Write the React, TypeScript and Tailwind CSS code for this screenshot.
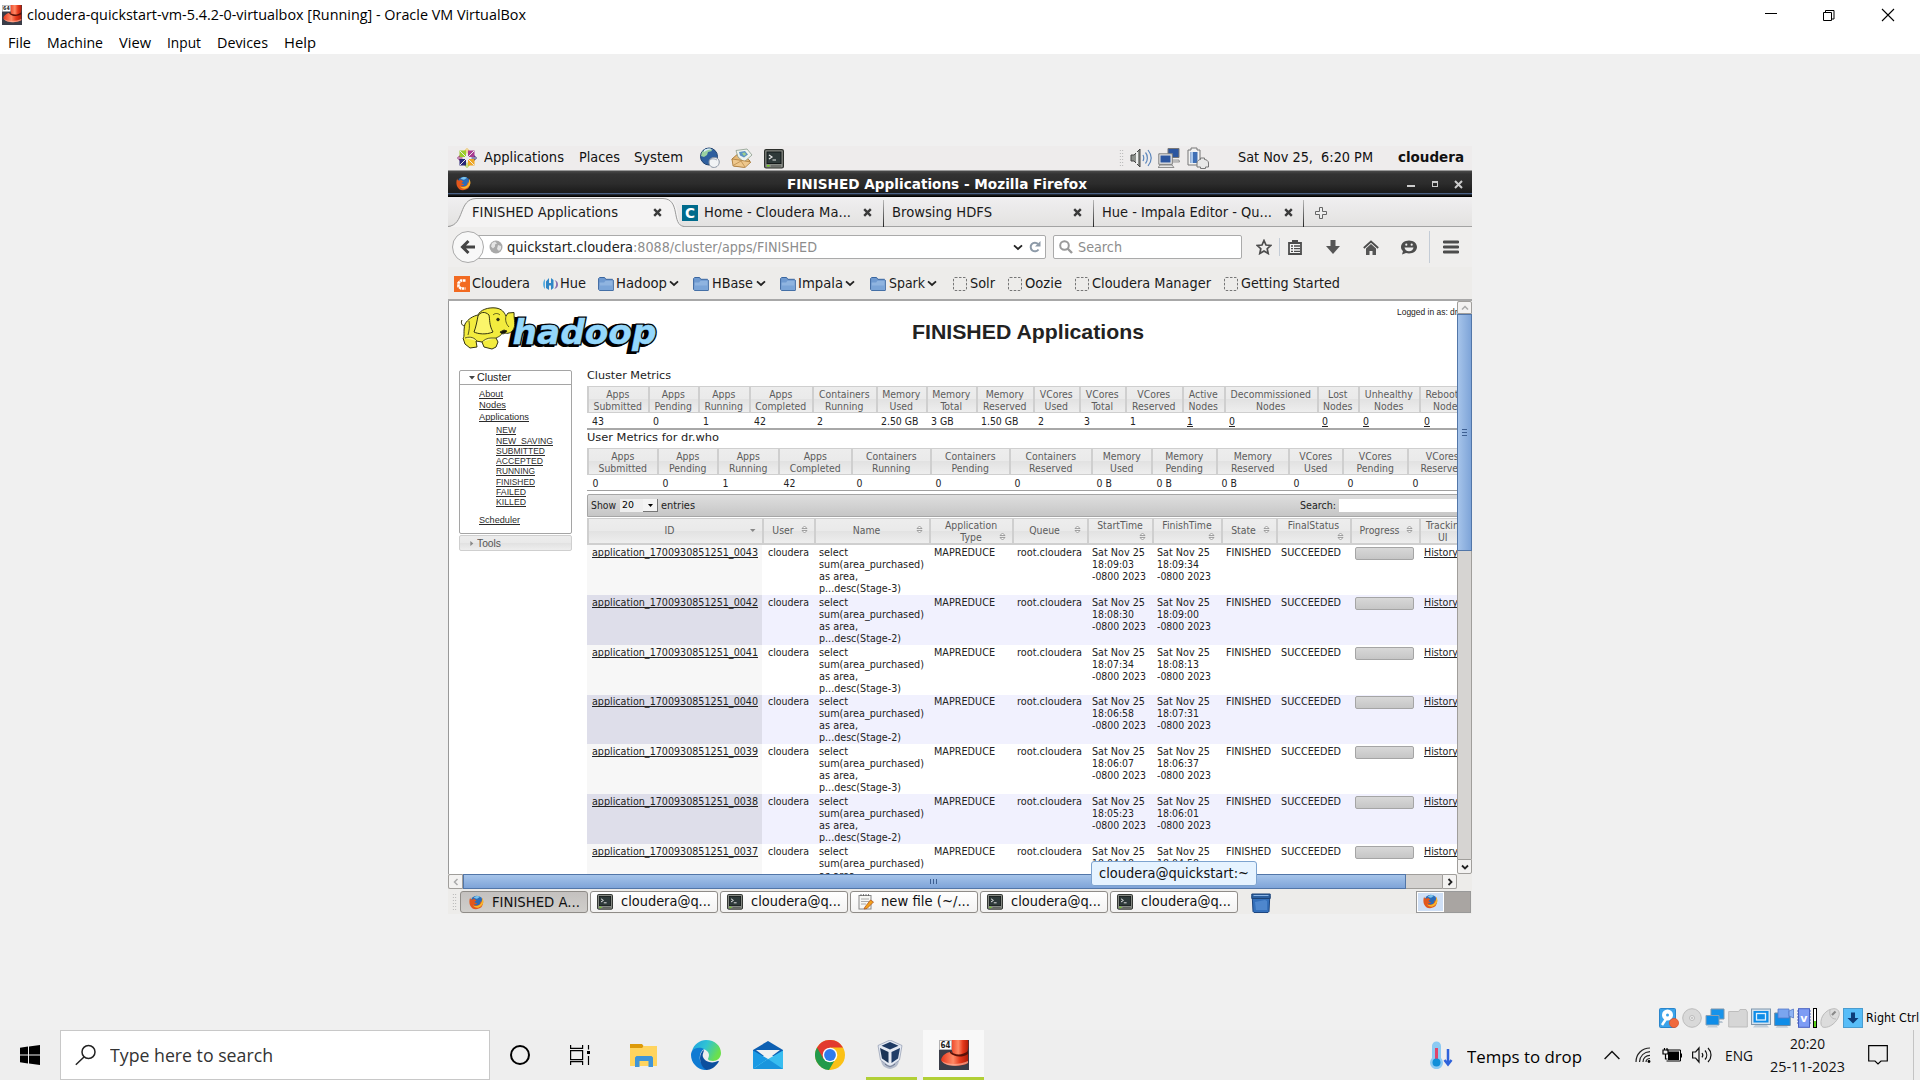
import React, { useLayoutEffect, useRef } from "react";

/** Text stretched or condensed so that it fills the width of its own box. */
function T({ className = "", underline = false, children }: { className?: string; underline?: boolean; children: React.ReactNode }) {
  const outer = useRef<HTMLSpanElement>(null);
  const inner = useRef<HTMLSpanElement>(null);
  useLayoutEffect(() => {
    const fit = () => {
      const o = outer.current;
      const i = inner.current;
      if (!o || !i) return;
      i.style.transform = "none";
      const natural = i.getBoundingClientRect().width;
      const target = o.getBoundingClientRect().width;
      if (natural > 0 && target > 0) i.style.transform = `scaleX(${target / natural})`;
    };
    fit();
    document.fonts?.ready.then(fit);
  }, []);
  return (
    <span ref={outer} className={`block shrink-0 whitespace-pre ${className}`}>
      <span ref={inner} className={`inline-block origin-left ${underline ? "underline decoration-1 underline-offset-1 [text-decoration-skip-ink:none]" : ""}`}>
        {children}
      </span>
    </span>
  );
}

/* ---------- icons ---------- */

function RedHat({ className = "" }: { className?: string }) {
  return (
    <svg viewBox="0 0 30 30" className={`shrink-0 ${className}`}>
      <defs>
        <linearGradient id="hat" x1="0" y1="0" x2="1" y2="0">
          <stop offset="0" stopColor="#e8381c" />
          <stop offset="0.45" stopColor="#ff8a66" />
          <stop offset="0.7" stopColor="#e63a1c" />
          <stop offset="1" stopColor="#b01c08" />
        </linearGradient>
      </defs>
      <rect width="30" height="30" fill="#3a3d48" />
      <path d="M11 0H29c1 5 0 9-1 13-4 4-10 4-14 1-1-4-3-8-3-14z" fill="url(#hat)" />
      <path d="M2 20c1-5 6-8 10-8 4 4 11 5 17 1v10c-6 4-24 4-27-3z" fill="url(#hat)" />
      <path d="M11 11c4 4 12 5 18 0v3c-6 4-14 3-18-1z" fill="#5c1208" />
      <path d="M3 21c5 4 18 4 26 0v2c-7 4-23 4-26-2z" fill="#ffb09a" opacity=".7" />
      <rect x="0.5" y="0.5" width="12" height="9" fill="#fff" stroke="#bbb" strokeWidth=".7" />
      <text x="1.6" y="8" fontSize="8" fontWeight="bold" fontFamily="DejaVu Sans" textLength="10" lengthAdjust="spacingAndGlyphs" fill="#222">64</text>
    </svg>
  );
}

function Firefox({ className = "" }: { className?: string }) {
  return (
    <svg viewBox="0 0 16 16" className={`shrink-0 ${className}`}>
      <circle cx="8.3" cy="7.3" r="6.6" fill="#2b6cb8" />
      <path d="M5 3a5 5 0 0 1 7-1c-2 0-2 2-4 2z" fill="#7cc4ec" />
      <path d="M1.3 2.6C.2 5 .2 8.5 1 10.600a7.300 7.300 0 0 0 14-2c.4-2-.1-4-1.200-5.400.2 2 0 3.400-.8 4.800-.3-.8-.5-1-.8-1.400.3 3-2 5-4.400 4.600-1.400-.2-2-1-2.300-1.600 1.300.4 2.300 0 3.200-.9-1.200-.2-2.400-.2-2.800-1.400.3-.8 1.500-.6 2-1.500C6.600 5.500 5.800 5 5.800 3.800c-.6.2-1 .5-1.500 1-.8-.2-1.600-.1-2 .1-.7-.6-1-1.300-1-2.300z" fill="#e2571c" />
      <path d="M15.200 8.500c.4-2-.1-4-1.200-5.300.3 3-.8 5.800-3 7.500-2 1.500-5 1.500-7 .2 2 3 6 3.700 9 .8 1.200-1 1.900-2 2.200-3.200z" fill="#f8b62c" />
    </svg>
  );
}

function TerminalIcon({ className = "" }: { className?: string }) {
  return (
    <svg viewBox="0 0 20 20" className={`shrink-0 ${className}`}>
      <rect x=".6" y=".6" width="18.800" height="18.400" rx="1.500" fill="#868a84" stroke="#2c2f2b" strokeWidth="1.200" />
      <rect x="3" y="3" width="14" height="11.500" fill="#2f3a3a" stroke="#151a1a" />
      <path d="M5 6l3 2-3 2M8.500 11h3.500" stroke="#e8e8e8" strokeWidth="1.200" fill="none" />
      <rect x="3" y="16" width="2.500" height="1.500" fill="#73d216" />
      <path d="M7 17h10" stroke="#555" />
    </svg>
  );
}

function Folder() {
  return (
    <svg viewBox="0 0 16 16" className="size-4 shrink-0">
      <path d="M.6 13.500V2.500l1-1h5l1.200 1.800h6.600l.9.900v10.200H1.600z" fill="#6f9ad0" stroke="#3a669f" />
      <path d="M1.600 14V6.500h4.500l1.400-1.700h7.200V14z" fill="#8fb4e0" />
      <path d="M1.600 14V9.500h13V14z" fill="#7ba5d8" />
    </svg>
  );
}

function Chevron({ className = "" }: { className?: string }) {
  return (
    <svg viewBox="0 0 10 7" className={`h-[7px] w-[10px] shrink-0 ${className}`}>
      <path d="M1 1.300l4 3.700 4-3.700" fill="none" stroke="#222" strokeWidth="1.800" />
    </svg>
  );
}

function Dashed({ className = "" }: { className?: string }) {
  return (
    <svg viewBox="0 0 14 14" className={`size-[14px] shrink-0 ${className}`}>
      <rect x=".5" y=".5" width="13" height="13" rx="1.500" fill="none" stroke="#777" strokeDasharray="2.500 1.500" />
    </svg>
  );
}

function TabClose({ className = "" }: { className?: string }) {
  return (
    <svg viewBox="0 0 9 9" className={`mt-[2px] size-[9px] shrink-0 ${className}`}>
      <path d="M1.200 1.200l6.600 6.600M7.800 1.200L1.200 7.800" stroke="#3a3a3a" strokeWidth="2.400" />
    </svg>
  );
}

function CentOS() {
  return (
    <svg viewBox="0 0 20 20" className="ml-[9px] mt-[2px] size-5 shrink-0">
      <path d="M10 0l3 3-3 3-3-3z" fill="#f0c04a" />
      <path d="M20 10l-3 3-3-3 3-3z" fill="#262577" />
      <path d="M10 20l-3-3 3-3 3 3z" fill="#9ccd2a" />
      <path d="M0 10l3-3 3 3-3 3z" fill="#932279" />
      <path d="M2.500 2.500H9V9H2.500z" fill="#9ccd2a" />
      <path d="M11 2.500h6.500V9H11z" fill="#a93a90" />
      <path d="M2.500 11H9v6.500H2.500z" fill="#262577" />
      <path d="M11 11h6.500v6.500H11z" fill="#efa724" />
      <path d="M3 3l14 14M17 3L3 17M10 1v18M1 10h18" stroke="#ece9e9" strokeWidth="1" />
    </svg>
  );
}

function GlobeMouse() {
  return (
    <svg viewBox="0 0 22 22" className="ml-4 mt-[1px] size-[22px] shrink-0">
      <circle cx="10" cy="9.500" r="8.500" fill="#2e5f9e" stroke="#20426f" />
      <path d="M3 5c3-3 7-4 9-3l1 2-4 1-1 3-3 2-3-1z" fill="#9bd1a0" />
      <path d="M5 3c3-2 7-2 9 0-3-1-6 0-9 2z" fill="#d9eefa" />
      <path d="M10 15c0-4 5-5.500 8-4 3 2 3 6 0 8.500-3 2-8 1-8-4.500z" fill="#f1f3f5" stroke="#8a94a2" />
      <path d="M11 13c2-2 5-1 7 0" stroke="#9aa4b0" fill="none" />
    </svg>
  );
}

function MailIcon() {
  return (
    <svg viewBox="0 0 22 20" className="ml-[10px] mt-[2px] h-[20px] w-[22px] shrink-0">
      <path d="M1 11l8-7 10 9-6 6-10-1z" fill="#e6b976" stroke="#a97b3c" />
      <path d="M5 2.500l11-1.500L21 7l-8 7-6-5z" fill="#eef3ee" stroke="#8a9a8a" strokeWidth=".8" />
      <path d="M8 4l6-1 3 3.500-4 3-4-2z" fill="#5b93c4" />
      <path d="M11 5l3-.5 1 2-2 1.500z" fill="#9fd08a" />
      <path d="M1 11l7 1 12 2-6 5.500-12-1.500z" fill="#efc88d" stroke="#a97b3c" strokeWidth=".8" />
      <path d="M2 17.500l8-4.500 4 6" fill="none" stroke="#b98b4c" strokeWidth=".8" />
    </svg>
  );
}

function HadoopLogo() {
  return (
    <svg viewBox="0 0 200 48" className="ml-[11px] mt-[6px] h-[48px] w-[200px] shrink-0">
      <g fontFamily="DejaVu Sans" fontWeight="bold" fontStyle="italic" fontSize="34">
        <text x="49.500" y="38" textLength="144" lengthAdjust="spacingAndGlyphs" fill="#000" stroke="#000" strokeWidth="4">hadoop</text>
        <text x="52.500" y="37" textLength="144" lengthAdjust="spacingAndGlyphs" fill="#000" stroke="#000" strokeWidth="3">hadoop</text>
        <text x="52.500" y="37" textLength="144" lengthAdjust="spacingAndGlyphs" fill="#94d7fb" stroke="#94d7fb" strokeWidth=".4">hadoop</text>
      </g>
      <g stroke="#33330f" strokeWidth="1" strokeLinejoin="round">
        <path d="M5 19C2 19 .5 16 2 13" fill="none" />
        <path d="M5 17C8 12 13 9 18 8 20 3 28 0 36 1c6 1 8 4 10 8l2-3 6-.5c0 8 2 13-1 17.500-3 4-7 4-10 2-2 4-5 5-7 6l2 4-2 5-4 2-8-2-2-5-6-1 1 6-7 1-5-4-2-6c2-1 0-7 2-14z" fill="#f3ec3e" />
        <path d="M5 31c3-1 8-2 12 3M22 35c2-2 5-4 9-4l5 0" fill="#fbf68a" strokeWidth=".8" />
        <path d="M18 9c2-4 7-5 11-1 1 5 0 10 4 17-7 3-15 2-19 0 2-5 3-11 4-16z" fill="#fbf56a" />
        <path d="M9 14c1 6 0 10-1 14M46 9c-1 4 0 8 3 11" fill="none" strokeWidth=".8" />
        <path d="M40 25c2 3 5 2 7-1l-3-1z" fill="#151505" />
        <path d="M33 8c2-2 5-2 7 0" fill="none" strokeWidth=".8" />
        <circle cx="38" cy="12.500" r="1.300" fill="#222" />
      </g>
    </svg>
  );
}

/* ---------- page data ---------- */

const clusterHead = [
  ["Apps", "Submitted"], ["Apps", "Pending"], ["Apps", "Running"], ["Apps", "Completed"],
  ["Containers", "Running"], ["Memory", "Used"], ["Memory", "Total"], ["Memory", "Reserved"],
  ["VCores", "Used"], ["VCores", "Total"], ["VCores", "Reserved"], ["Active", "Nodes"],
  ["Decommissioned", "Nodes"], ["Lost", "Nodes"], ["Unhealthy", "Nodes"], ["Rebooted", "Nodes"],
];
const clusterVals = ["43", "0", "1", "42", "2", "2.50 GB", "3 GB", "1.50 GB", "2", "3", "1", "1", "0", "0", "0", "0"];

const userHead = [
  ["Apps", "Submitted"], ["Apps", "Pending"], ["Apps", "Running"], ["Apps", "Completed"],
  ["Containers", "Running"], ["Containers", "Pending"], ["Containers", "Reserved"],
  ["Memory", "Used"], ["Memory", "Pending"], ["Memory", "Reserved"],
  ["VCores", "Used"], ["VCores", "Pending"], ["VCores", "Reserved"],
];
const userVals = ["0", "0", "1", "42", "0", "0", "0", "0 B", "0 B", "0 B", "0", "0", "0"];

const jobs = [
  { id: "0043", stage: 3, s: "18:09:03", f: "18:09:34", h: "h-[50px] pt-[1px]" },
  { id: "0042", stage: 2, s: "18:08:30", f: "18:09:00", h: "h-[50px] pt-[1px]" },
  { id: "0041", stage: 3, s: "18:07:34", f: "18:08:13", h: "h-[50px] pt-[1px]" },
  { id: "0040", stage: 2, s: "18:06:58", f: "18:07:31", h: "h-[49px]" },
  { id: "0039", stage: 3, s: "18:06:07", f: "18:06:37", h: "h-[50px] pt-[1px]" },
  { id: "0038", stage: 2, s: "18:05:23", f: "18:06:01", h: "h-[50px] pt-[1px]" },
  { id: "0037", stage: 3, s: "18:04:18", f: "18:04:58", h: "h-[50px] pt-[1px]" },
];

const COLS = "grid grid-cols-[175px_52px_115px_83px_75px_65px_69px_55px_74px_69px_61px] w-[893px]";
const TH = "bg-[linear-gradient(#ededed_0%,#eaeaea_48%,#e2e2e2_50%,#eeeeee_100%)] border-[#cfcfcf] text-[#5c5c5c]";

function Sort({ down = false }: { down?: boolean }) {
  return (
    <svg viewBox="0 0 7 9" className="h-[9px] w-[7px] shrink-0">
      {down ? (
        <path d="M1 4h5.500L3.750 7z" fill="#888" />
      ) : (
        <path d="M1 3.500L3.500 1 6 3.500zM1 5.500L3.500 8 6 5.500z" fill="#fafafa" stroke="#8c8c8c" strokeWidth=".8" />
      )}
    </svg>
  );
}

function HeadOne({ label, down = false }: { label: string; down?: boolean }) {
  return (
    <div className={`flex items-center border-l-2 pb-[3px] pr-[6px] ${TH}`}>
      <span className="flex-1 pl-[1px] text-center">{label}</span>
      <Sort down={down} />
    </div>
  );
}

function HeadTwo({ a, b = "" }: { a: string; b?: string }) {
  return (
    <div className={`relative border-l-2 pr-[1px] text-center ${TH}`}>
      <div>{a}</div>
      <div>{b}</div>
      <span className="absolute bottom-[2px] right-[6px] flex">
        <Sort />
      </span>
    </div>
  );
}

function MetricHead({ rows, pad }: { rows: string[][]; pad: string }) {
  return (
    <>
      {rows.map(([a, b], i) => (
        <div key={i} className={`h-[27px] border-y border-l-2 pt-[1px] text-center leading-[12px] ${pad} ${TH}`}>
          <div>{a}</div>
          <div>{b}</div>
        </div>
      ))}
    </>
  );
}

function Side({ className, children }: { className: string; children: string }) {
  return <T underline className={`font-['Liberation_Sans'] text-[9.500px] leading-[10px] text-[#2b2b2b] ${className}`}>{children}</T>;
}

function HadoopPage() {
  return (
    <div className="flex h-[573px] w-[1009px] overflow-hidden border-l border-[#999] bg-white">
      {/* sidebar */}
      <div className="flex w-[138px] shrink-0 flex-col">
        <div className="h-[69px] w-[138px] shrink-0">
          <HadoopLogo />
        </div>
        <div className="ml-[10px] flex h-[164px] w-[113px] shrink-0 flex-col rounded-[2px] border border-[#a5a5a5]">
          <div className="flex h-[14px] shrink-0 items-center border-b border-[#a5a5a5]">
            <svg viewBox="0 0 6 4" className="ml-[9px] h-[4px] w-[6px]"><path d="M0 0h6L3 3.500z" fill="#444" /></svg>
            <T className="ml-[2px] w-[34px] font-['Liberation_Sans'] text-[11px] leading-[13px] text-[#222]">Cluster</T>
          </div>
          <Side className="ml-[19px] mt-[4px] w-[24px]">About</Side>
          <Side className="ml-[19px] mt-[1px] w-[27px]">Nodes</Side>
          <Side className="ml-[19px] mt-[2px] w-[50px]">Applications</Side>
          <Side className="ml-[36px] mt-[3px] w-[20px]">NEW</Side>
          <Side className="ml-[36px] mt-[1px] w-[57px]">NEW_SAVING</Side>
          <Side className="ml-[36px] w-[49px]">SUBMITTED</Side>
          <Side className="ml-[36px] w-[47px]">ACCEPTED</Side>
          <Side className="ml-[36px] w-[39px]">RUNNING</Side>
          <Side className="ml-[36px] mt-[1px] w-[39px]">FINISHED</Side>
          <Side className="ml-[36px] w-[30px]">FAILED</Side>
          <Side className="ml-[36px] w-[30px]">KILLED</Side>
          <Side className="ml-[19px] mt-[8px] w-[41px]">Scheduler</Side>
        </div>
        <div className="ml-[10px] mt-px flex h-[16px] w-[113px] shrink-0 items-center rounded-[2px] border border-[#cfcfcf] bg-[linear-gradient(#ededed_0%,#e9e9e9_48%,#e1e1e1_50%,#eeeeee_100%)]">
          <svg viewBox="0 0 4 6" className="ml-[10px] h-[5px] w-[4px]"><path d="M0 0v6l3.500-3z" fill="#888" /></svg>
          <T className="ml-[3px] w-[24px] font-['Liberation_Sans'] text-[11px] leading-[13px] text-[#555]">Tools</T>
        </div>
      </div>

      {/* main */}
      <div className="flex w-[893px] shrink-0 flex-col text-[10.400px] leading-[12px] text-[#222] font-['DejaVu_Sans_Condensed','DejaVu_Sans',sans-serif] [font-stretch:condensed]">
        <div className="flex h-[69px] shrink-0 items-start">
          <T className="ml-[325px] mt-[18px] w-[232px] font-['Liberation_Sans'] text-[21px] font-bold leading-[26px] text-[#222] [font-stretch:normal]">FINISHED Applications</T>
          <T className="ml-[253px] mt-[5px] w-[78px] font-['Liberation_Sans'] text-[9px] leading-[12px] [font-stretch:normal]">Logged in as: dr.who</T>
        </div>
        <div className="flex h-[16px] shrink-0 items-start">
          <T className="w-[84px] font-['DejaVu_Sans'] text-[11px] leading-[12px] [font-stretch:normal]">Cluster Metrics</T>
        </div>
        <div className="grid w-[889px] shrink-0 grid-cols-[61px_50px_51px_63px_64px_50px_50px_57px_46px_46px_57px_42px_93px_41px_61px_57px] border-b-2 border-[#a8a8a8]">
          <MetricHead rows={clusterHead} pad="pr-[1.500px]" />
          {clusterVals.map((v, i) => (
            <span key={i} className={`h-[15px] pl-[5px] pt-[2px] ${i > 10 ? "underline" : ""}`}>{v}</span>
          ))}
        </div>
        <div className="flex h-[18px] shrink-0 items-start pt-[2px]">
          <T className="w-[132px] font-['DejaVu_Sans'] text-[11px] leading-[12px] [font-stretch:normal]">User Metrics for dr.who</T>
        </div>
        <div className="grid w-[889px] shrink-0 grid-cols-[70px_60px_61px_73px_79px_79px_82px_60px_65px_72px_54px_65px_69px] border-b border-[#a0a0a0]">
          <MetricHead rows={userHead} pad="pr-[0.500px]" />
          {userVals.map((v, i) => (
            <span key={i} className="h-[15px] pl-[5.500px] pt-[2px]">{v}</span>
          ))}
        </div>
        {/* toolbar */}
        <div className="mt-[3px] flex h-[23px] w-[893px] shrink-0 items-center rounded-tl-[2px] border border-[#a6a6a6] bg-[linear-gradient(#dedede,#c6c6c6)]">
          <T className="-mt-[2px] ml-[3px] w-[25px]">Show</T>
          <div className="ml-[4px] flex h-[13px] w-[38px] items-center bg-[#efefef]">
            <T className="ml-[2px] w-[12px] font-['DejaVu_Sans'] text-[9px] leading-[13px] text-black [font-stretch:normal]">20</T>
            <div className="ml-auto flex h-[13px] w-[15px] items-center justify-center border-b border-r border-[#777] bg-[#f4f4f4]">
              <svg viewBox="0 0 5 3" className="h-[3px] w-[5px]"><path d="M0 0h5L2.500 3z" fill="#000" /></svg>
            </div>
          </div>
          <T className="-mt-[2px] ml-[3px] w-[34px]">entries</T>
          <T className="-mt-[2px] ml-[605px] w-[36px]">Search:</T>
          <div className="ml-[3px] h-[13px] w-[130px] bg-white" />
        </div>
        {/* applications */}
        <div className={`mt-px h-[27px] shrink-0 border-b-2 border-t border-[#cfcfcf] ${COLS}`}>
          <HeadOne label="ID" down />
          <HeadOne label="User" />
          <HeadOne label="Name" />
          <HeadTwo a="Application" b="Type" />
          <HeadOne label="Queue" />
          <HeadTwo a="StartTime" />
          <HeadTwo a="FinishTime" />
          <HeadOne label="State" />
          <HeadTwo a="FinalStatus" />
          <HeadOne label="Progress" />
          <div className={`border-l-2 pl-[5px] ${TH}`}>
            <div>Tracking</div>
            <div className="pl-[12px]">UI</div>
          </div>
        </div>
        {jobs.map((j, i) => (
          <div key={j.id} className={`shrink-0 ${COLS} ${i % 2 ? "bg-[#f1f1fe]" : "bg-white"}`}>
            <div className={`pl-[5px] ${j.h} ${i % 2 ? "bg-[#dedeea]" : "bg-[#f7f7f7]"}`}>
              <T underline className="w-[166px]">{`application_1700930851251_${j.id}`}</T>
            </div>
            <div className={`pl-[6px] ${j.h}`}><T className="w-[41px]">cloudera</T></div>
            <div className={`pl-[5px] ${j.h}`}>
              <T className="w-[29px]">select</T>
              <T className="w-[105px]">sum(area_purchased)</T>
              <T className="w-[39px]">as area,</T>
              <T className="w-[82px]">{`p...desc(Stage-${j.stage})`}</T>
            </div>
            <div className={`pl-[5px] ${j.h}`}><T className="w-[61px]">MAPREDUCE</T></div>
            <div className={`pl-[5px] ${j.h}`}><T className="w-[65px]">root.cloudera</T></div>
            <div className={`pl-[5px] ${j.h}`}>
              <T className="w-[53px]">Sat Nov 25</T>
              <T className="w-[42px]">{j.s}</T>
              <T className="w-[54px]">-0800 2023</T>
            </div>
            <div className={`pl-[5px] ${j.h}`}>
              <T className="w-[53px]">Sat Nov 25</T>
              <T className="w-[42px]">{j.f}</T>
              <T className="w-[54px]">-0800 2023</T>
            </div>
            <div className={`pl-[5px] ${j.h}`}><T className="w-[45px]">FINISHED</T></div>
            <div className={`pl-[5px] ${j.h}`}><T className="w-[60px]">SUCCEEDED</T></div>
            <div className={`pl-[5px] ${j.h}`}>
              <div className="mt-[1px] h-[13px] w-[59px] rounded-[2px] border border-[#a5a5a5] bg-[linear-gradient(#d8d8d8,#c6c6c6)]" />
            </div>
            <div className={`pl-[5px] ${j.h}`}><T underline className="w-[34px]">History</T></div>
          </div>
        ))}
      </div>
    </div>
  );
}

/* ---------- Firefox ---------- */

function Browser() {
  return (
    <>
      <div className="flex h-[26px] items-center border-b border-black bg-[linear-gradient(#4a4a4a_0%,#333_12%,#2c2c2c_50%,#1b1b1b_86%,#4a6185_90%,#111_96%)] text-white">
        <Firefox className="ml-2 size-[15px]" />
        <T className="ml-[316px] mt-[2px] w-[300px] text-[13.300px] font-bold leading-4">FINISHED Applications - Mozilla Firefox</T>
        <div className="ml-[320px] mt-[5px] h-[2px] w-[8px] bg-[#ccc]" />
        <div className="ml-[17px] size-[6px] border border-[#ccc] border-t-2" />
        <svg viewBox="0 0 9 9" className="ml-[16px] mt-[1px] size-[9px]"><path d="M1 1l7 7M8 1L1 8" stroke="#ccc" strokeWidth="2" /></svg>
      </div>
      {/* tab strip */}
      <div className="relative flex h-[30px] items-center border-b border-[#a3a3a3] bg-[linear-gradient(#f0eff0,#e3e2e1)] text-[13.300px] leading-4 text-[#1a1a1a]">
        <svg viewBox="0 0 236 30" className="absolute left-0 top-0 h-[30px] w-[236px]">
          <path d="M0 30C17 28 10 2 28 1.500H217C235 2 226 28 236 29.500V30z" fill="#f4f3f3" />
          <path d="M0 29.500C17 28 10 2 28 1.500H215C233 2 223 28 236 29.500" fill="none" stroke="#999" />
        </svg>
        <T className="relative ml-6 mt-[3px] w-[146px]">FINISHED Applications</T>
        <TabClose className="relative ml-[35px]" />
        <div className="relative ml-[20px] mt-[3px] flex size-4 items-center justify-center bg-[#006b8c]">
          <T className="w-[10px] text-[14px] font-bold text-white">C</T>
        </div>
        <T className="ml-[6px] mt-[3px] w-[147px]">Home - Cloudera Ma...</T>
        <TabClose className="ml-[12px]" />
        <div className="ml-[11px] mt-[3px] h-[27px] w-px bg-[linear-gradient(#bbb,#222)]" />
        <T className="ml-[8px] mt-[3px] w-[100px]">Browsing HDFS</T>
        <TabClose className="ml-[81px]" />
        <div className="ml-[11px] mt-[3px] h-[27px] w-px bg-[linear-gradient(#bbb,#222)]" />
        <T className="ml-[8px] mt-[3px] w-[170px]">Hue - Impala Editor - Qu...</T>
        <TabClose className="ml-[12px]" />
        <div className="ml-[10px] mt-[3px] h-[27px] w-px bg-[linear-gradient(#bbb,#222)]" />
        <svg viewBox="0 0 12 12" className="ml-[11px] mt-[2px] size-[12px]"><path d="M4.500.500h3v4h4v3h-4v4h-3v-4h-4v-3h4z" fill="#eee" stroke="#666" /></svg>
      </div>
      {/* navigation */}
      <div className="flex h-[40px] items-center bg-[#efeeed] text-[13.300px] leading-4">
        <div className="z-10 ml-[4px] flex size-8 shrink-0 items-center justify-center rounded-full border border-[#aaa] bg-[#f8f8f8]">
          <svg viewBox="0 0 16 16" className="size-[16px]"><path d="M8.500 2L2.500 8l6 6M3 8h12" fill="none" stroke="#444" strokeWidth="3" /></svg>
        </div>
        <div className="-ml-[9px] flex h-6 w-[571px] shrink-0 items-center rounded-[2px] border border-[#aaa] bg-white">
          <svg viewBox="0 0 14 14" className="ml-[13px] size-[14px]"><circle cx="7" cy="7" r="6.500" fill="#a9a9a9" /><path d="M3 3l3-1.500 2 2-2 1 0 2-2 2-2-2zM9 5l3 1 0 3-2 2-2-2z" fill="#e4e4e4" /></svg>
          <T className="ml-[4px] mt-[1px] w-[126px] text-[#222]">quickstart.cloudera</T>
          <T className="mt-[1px] w-[184px] text-[#8d8d8d]">:8088/cluster/apps/FINISHED</T>
          <Chevron className="ml-[196px]" />
          <svg viewBox="0 0 12 12" className="ml-[6px] size-[12px]"><path d="M9.500 8.500A4.300 4.300 0 1 1 9 3" fill="none" stroke="#8d9aa8" strokeWidth="2" /><path d="M11.500 0v5.500H6z" fill="#8d9aa8" /></svg>
        </div>
        <div className="ml-[7px] flex h-6 w-[189px] shrink-0 items-center rounded-[2px] border border-[#aaa] bg-white">
          <svg viewBox="0 0 14 14" className="ml-[5px] size-[14px]"><circle cx="5.500" cy="5.500" r="4.300" fill="none" stroke="#999" strokeWidth="2" /><path d="M8.500 8.500L13 13" stroke="#999" strokeWidth="2.400" /></svg>
          <T className="ml-[5px] mt-[1px] w-[44px] text-[#8d8d8d]">Search</T>
        </div>
        <svg viewBox="0 0 16 16" className="ml-[14px] size-4 shrink-0"><path d="M8 1.500l2 4.500 4.800.500-3.600 3.200 1 4.800L8 12l-4.200 2.500 1-4.800L1.200 6.500 6 6z" fill="none" stroke="#4c4c4c" strokeWidth="1.700" /></svg>
        <div className="ml-[7px] h-[18px] w-px bg-[#c4ccd6]" />
        <svg viewBox="0 0 14 15" className="ml-[8px] h-[15px] w-[14px] shrink-0"><path d="M1 3h12v11H1z" fill="#f4f4f4" stroke="#4c4c4c" strokeWidth="1.800" /><path d="M4 0h6v4H4z" fill="#4c4c4c" /><path d="M3 6h2M6 6h6M3 8.700h2M6 8.700h6M3 11.300h2M6 11.300h6" stroke="#4c4c4c" strokeWidth="1.300" /></svg>
        <svg viewBox="0 0 14 14" className="ml-[24px] size-[14px] shrink-0"><path d="M4.500 0h5v6H14l-7 8-7-8h4.500z" fill="#555" /></svg>
        <svg viewBox="0 0 16 15" className="ml-[23px] h-[15px] w-4 shrink-0"><path d="M.8 8L8 1.500 15.200 8" fill="none" stroke="#4c4c4c" strokeWidth="1.800" /><path d="M3 8.500l5-4.500 5 4.500V15H9.500v-4h-3v4H3z" fill="#555" /></svg>
        <svg viewBox="0 0 16 15" className="ml-[22px] h-[15px] w-4 shrink-0"><path d="M8 .500c4.500 0 8 2.800 8 6.500s-3.500 6.500-8 6.500c-1 0-2-.2-3-.5L1 14.500l1-3.400C.7 10 0 8.600 0 7 0 3.300 3.500.500 8 .500z" fill="#4c4c4c" /><path d="M3.500 7.500h9c-.3 2.300-2 3.700-4.500 3.700S3.800 9.800 3.500 7.500z" fill="#eee" /><circle cx="5.300" cy="4.700" r="1.100" fill="#eee" /><circle cx="10.700" cy="4.700" r="1.100" fill="#eee" /></svg>
        <div className="ml-[12px] h-[32px] w-px bg-[#c4ccd6]" />
        <svg viewBox="0 0 16 14" className="ml-[13px] h-[14px] w-4 shrink-0"><path d="M1 2h14M1 7h14M1 12h14" stroke="#4c4c4c" strokeWidth="2.800" strokeLinecap="round" /></svg>
      </div>
      {/* bookmarks */}
      <div className="flex h-[34px] items-center border-b-2 border-[#a8a8a8] bg-[#edecea] pt-[1px] text-[13.300px] leading-4 text-[#1a1a1a]">
        <svg viewBox="0 0 16 16" className="ml-[6px] size-4 shrink-0"><rect width="16" height="16" fill="#f26a21" /><path d="M11.500 4.500H7L4.500 7v3.500L7 12.500h4.500" fill="none" stroke="#fff" strokeWidth="2.600" strokeDasharray="2.500 .6" /></svg>
        <T className="ml-[2px] w-[58px]">Cloudera</T>
        <svg viewBox="0 0 16 14" className="ml-[12px] h-[14px] w-4 shrink-0"><path d="M3 2C.5 4 .5 10 3 12z" fill="#59aee0" /><path d="M4 4.500L7 1v5h2V1l2.500 2v8L9 13V8.500H7V13l-3-2z" fill="#2f86c6" /><path d="M12.300 3c2.500 2 2.500 6 0 9 2.700-.5 3.700-2.500 3.700-4.500S15 3.500 12.300 3z" fill="#8a6fb0" /></svg>
        <T className="ml-[2px] w-[26px]">Hue</T>
        <div className="w-[12px]" /><Folder />
        <T className="ml-[2px] w-[51px]">Hadoop</T><Chevron className="ml-[2px]" />
        <div className="w-[14px]" /><Folder />
        <T className="ml-[3px] w-[41px]">HBase</T><Chevron className="ml-[3px]" />
        <div className="w-[14px]" /><Folder />
        <T className="ml-[2px] w-[45px]">Impala</T><Chevron className="ml-[2px]" />
        <div className="w-[15px]" /><Folder />
        <T className="ml-[3px] w-[36px]">Spark</T><Chevron className="ml-[2px]" />
        <Dashed className="ml-[16px]" /><T className="ml-[3px] w-[25px]">Solr</T>
        <Dashed className="ml-[13px]" /><T className="ml-[3px] w-[37px]">Oozie</T>
        <Dashed className="ml-[13px]" /><T className="ml-[3px] w-[119px]">Cloudera Manager</T>
        <Dashed className="ml-[13px]" /><T className="ml-[3px] w-[99px]">Getting Started</T>
      </div>
      {/* viewport */}
      <div className="flex">
        <div className="flex w-[1009px] shrink-0 flex-col">
          <HadoopPage />
          <div className="flex h-[15px] items-stretch bg-[#d4d2d0]">
            <div className="flex w-[15px] items-center justify-center rounded-l-[2px] border border-[#a09e9b] bg-[#f3f2f1]">
              <svg viewBox="0 0 6 8" className="h-2 w-1.5"><path d="M4.500 1L1.500 4l3 3" fill="none" stroke="#aaa" strokeWidth="1.500" /></svg>
            </div>
            <div className="flex w-[943px] items-center justify-center gap-[2px] border border-[#5276a8] bg-[linear-gradient(#a6c4ea,#7ea4d8)] pr-[2px]">
              <div className="h-[5px] w-px bg-[#3d5f92]" /><div className="h-[5px] w-px bg-[#3d5f92]" /><div className="h-[5px] w-px bg-[#3d5f92]" />
            </div>
            <div className="w-[36px] border-y border-[#a09e9b]" />
            <div className="flex w-[15px] items-center justify-center rounded-r-[2px] border border-[#a09e9b] bg-[#f3f2f1]">
              <svg viewBox="0 0 6 8" className="h-2 w-1.5"><path d="M1.500 1l3 3-3 3" fill="none" stroke="#222" strokeWidth="1.800" /></svg>
            </div>
          </div>
        </div>
        <div className="flex w-[15px] flex-col bg-[#edecea]">
          <div className="flex h-[13px] items-center justify-center rounded-t-[2px] border border-[#a09e9b] bg-[#f3f2f1]">
            <svg viewBox="0 0 8 6" className="h-1.5 w-2"><path d="M1 4.500l3-3 3 3" fill="none" stroke="#aaa" strokeWidth="1.500" /></svg>
          </div>
          <div className="flex h-[237px] flex-col items-center justify-center gap-[2px] border border-[#5276a8] bg-[linear-gradient(90deg,#a6c4ea,#7ea4d8)]">
            <div className="h-px w-[5px] bg-[#3d5f92]" /><div className="h-px w-[5px] bg-[#3d5f92]" /><div className="h-px w-[5px] bg-[#3d5f92]" />
          </div>
          <div className="h-[308px] border-x border-[#a09e9b] bg-[#d6d4d2]" />
          <div className="flex h-[15px] items-center justify-center rounded-b-[2px] border border-[#a09e9b] bg-[#f3f2f1]">
            <svg viewBox="0 0 8 6" className="h-1.5 w-2"><path d="M1 1.500l3 3 3-3" fill="none" stroke="#222" strokeWidth="1.800" /></svg>
          </div>
        </div>
      </div>
    </>
  );
}

/* ---------- guest desktop ---------- */

function Handle() {
  return <div className="h-[18px] w-[5px] shrink-0 bg-[radial-gradient(#aaa_0.6px,transparent_0.8px)] bg-[size:2.500px_3px]" />;
}

function TaskButton({ children, className = "bg-[linear-gradient(#ffffff,#f3f2f1)]" }: { children: React.ReactNode; className?: string }) {
  return <div className={`flex h-[22px] w-[128px] shrink-0 items-center rounded-[3px] border border-[#8f8c88] ${className}`}>{children}</div>;
}

function TermButton() {
  return (
    <TaskButton>
      <TerminalIcon className="ml-[6px] mt-[1px] size-4" />
      <T className="ml-[8px] w-[90px]">cloudera@q...</T>
    </TaskButton>
  );
}

function Guest() {
  return (
    <div className="relative ml-[448px] mt-[92px] flex h-[768px] w-[1024px] flex-col bg-[#edecea] font-['DejaVu_Sans',sans-serif] text-[13.300px] leading-4 text-[#111]">
      <div className="flex h-[25px] shrink-0 items-start border-b border-[#999] bg-[#eeecec]">
        <CentOS />
        <T className="ml-[7px] mt-[4px] w-[80px]">Applications</T>
        <T className="ml-[15px] mt-[4px] w-[41px]">Places</T>
        <T className="ml-[14px] mt-[4px] w-[49px]">System</T>
        <GlobeMouse />
        <MailIcon />
        <TerminalIcon className="ml-[11px] mt-[3px] size-5" />
        <div className="ml-[335px] mt-[3px]"><Handle /></div>
        <svg viewBox="0 0 22 20" className="ml-[6px] mt-[2px] h-5 w-[22px] shrink-0"><path d="M1 7h3l6-6v18l-6-6H1z" fill="#8d908c" stroke="#444" /><path d="M7 4v12" stroke="#eee" strokeWidth="2" /><path d="M13 7c1 2 1 4 0 6M15.500 4.500c2.500 3 2.500 8 0 11M18 2c4 5 4 11 0 16" fill="none" stroke="#5b86bd" strokeWidth="1.200" /></svg>
        <svg viewBox="0 0 22 20" className="ml-[6px] mt-[2px] h-5 w-[22px] shrink-0"><path d="M10 .500h11v9H10z" fill="#2c56a0" stroke="#777" /><path d="M12 12h9l.5 2H11z" fill="#ddd" stroke="#777" strokeWidth=".7" /><path d="M1.500 6.500h12v9h-12z" fill="#2c56a0" stroke="#e6e6e6" strokeWidth="2" /><path d="M.8 5.800h13.500v10.500H.8z" fill="none" stroke="#666" strokeWidth=".8" /><path d="M2 17h12l2 2.500H0z" fill="#e6e6e6" stroke="#777" strokeWidth=".8" /></svg>
        <svg viewBox="0 0 22 22" className="ml-[7px] mt-[1px] size-[22px] shrink-0"><path d="M1 3h3V1h6v2h3v15H1z" fill="#f2f2f2" stroke="#777" /><path d="M3.500 5h7v11h-7z" fill="#3f6fb5" /><path d="M4 5h2v11H4z" fill="#a9c6ea" /><path d="M10 20v-4c0-2 2-3.500 3.500-3.500V11h4v1.500C19.500 12.500 21.500 14 21.500 16v4h-3v1.500h-5V20z" fill="#e8e8e8" stroke="#777" /></svg>
        <T className="ml-[29px] mt-[4px] w-[135px]">Sat Nov 25,  6:20 PM</T>
        <T className="ml-[25px] mt-[4px] w-[66px] font-bold">cloudera</T>
      </div>
      <Browser />
      <div className="flex h-[25px] items-center gap-[2px] bg-[#edecea]">
        <div className="ml-[4px] mr-[1px]"><Handle /></div>
        <TaskButton className="bg-[linear-gradient(#c4c1bf,#d0cecb)]">
          <Firefox className="ml-[8px] mt-[2px] size-[15px]" />
          <T className="ml-[8px] mt-[2px] w-[88px]">FINISHED A...</T>
        </TaskButton>
        <TermButton />
        <TermButton />
        <TaskButton>
          <svg viewBox="0 0 16 16" className="ml-[7px] size-4 shrink-0"><rect x="1" y="1.500" width="12" height="13.500" fill="#f7f7f4" stroke="#888" /><path d="M3 5h8M3 7.500h8M3 10h5" stroke="#aaa" /><path d="M2.500 1h1M5 1h1M7.500 1h1M10 1h1" stroke="#555" strokeWidth="1.500" /><path d="M7 13l5.500-7 3 2L9 14.500l-3 .5z" fill="#f2a11c" stroke="#b3541a" strokeWidth=".8" /></svg>
          <T className="ml-[7px] w-[89px]">new file (~/...</T>
        </TaskButton>
        <TermButton />
        <TermButton />
        <svg viewBox="0 0 20 20" className="ml-[11px] mt-[2px] h-5 w-5 shrink-0"><path d="M1.200 3l.8 15.500 1 1h14l1-1L18.800 3z" fill="#3470bb" stroke="#1d4680" /><path d="M4 9l10-2 2 1v9H5z" fill="#5a92d6" opacity=".7" /><path d="M.8 1h18.400v4.500H.8z" fill="#2b5f9f" stroke="#1c4377" /><path d="M2.500 2.500h15" stroke="#8ab4e6" /></svg>
        <div className="ml-auto mr-[1px] flex h-[22px] w-[55px] border border-[#999] bg-[#a9a5a2]">
          <div className="flex w-[27px] items-center justify-center border border-white bg-[#cfdff5]"><Firefox className="size-[15px]" /></div>
        </div>
      </div>
      <div className="absolute left-[643px] top-[715px] flex h-[25px] w-[166px] items-center rounded-[3px] border border-[#7da3cf] bg-[#e6f3ff]">
        <T className="ml-[7px] w-[150px]">cloudera@quickstart:~</T>
      </div>
    </div>
  );
}

/* ---------- host ---------- */

function StatusIcons() {
  return (
    <div className="flex h-5 items-center gap-[3px]">
      <svg viewBox="0 0 20 20" className="size-5"><rect x=".5" y=".5" width="16" height="19" rx="1" fill="#3ba3ea" stroke="#2a86cc" /><circle cx="8.500" cy="7" r="5.500" fill="#fff" /><circle cx="8.500" cy="7" r="1.500" fill="#3ba3ea" /><path d="M3 17l4-6" stroke="#fff" strokeWidth="2.500" /><circle cx="15" cy="15" r="4.600" fill="#f0693c" stroke="#d4502a" strokeWidth=".7" /></svg>
      <svg viewBox="0 0 20 20" className="size-5"><circle cx="10" cy="10" r="9.300" fill="#d9d9d9" stroke="#bbb" /><circle cx="10" cy="10" r="2.500" fill="#eee" stroke="#bbb" /><circle cx="10" cy="10" r=".8" fill="#999" /></svg>
      <svg viewBox="0 0 20 20" className="size-5"><path d="M6 1h13v10H6z" fill="#1793ea" stroke="#7c95ab" /><path d="M9 13h8l1 2H9z" fill="#b9c6d2" /><path d="M1 7.500h13v9.500H1z" fill="#0f8de8" stroke="#8aa1b5" /><path d="M4 17h7l2 2.500H2z" fill="#c3ced8" /></svg>
      <svg viewBox="0 0 20 20" className="size-5"><path d="M.7 19V3.500h10L12 1.500h6L19.300 4v15z" fill="#d6d6d6" stroke="#bdbdbd" /></svg>
      <svg viewBox="0 0 20 20" className="size-5"><rect x=".5" y="1" width="19" height="15.500" fill="#d5e2ee" stroke="#7f96ab" /><rect x="2.500" y="3" width="15" height="11.500" fill="#0f8de8" /><rect x="5.500" y="5.500" width="9" height="6.500" fill="none" stroke="#dff0fd" strokeWidth="1.300" /><path d="M4 17h12l2 2.500H2z" fill="#c3ced8" /></svg>
      <svg viewBox="0 0 20 20" className="size-5"><path d="M.7 5h15.500v12.500H.7z" fill="#0f8de8" stroke="#6f8ba5" /><path d="M4 1h11v9H4z" fill="#7ba5ef" stroke="#5579c8" strokeWidth=".8" /><path d="M15 3l4.500-2v9L15 8z" fill="#8fb4f4" stroke="#5579c8" strokeWidth=".8" /><path d="M3 18h10l1.500 1.800H1.500z" fill="#c3ced8" /></svg>
      <svg viewBox="0 0 14 20" className="h-5 w-3.5"><rect x="1.500" y=".7" width="11" height="18.600" fill="#7d9cf4" stroke="#4860c0" /><path d="M0 3h2M0 6h2M0 9h2M0 12h2M0 15h2M12 3h2M12 6h2M12 9h2M12 12h2M12 15h2" stroke="#4860c0" /><text x="3.300" y="14" fontSize="11" fontWeight="bold" fontFamily="DejaVu Sans" fill="#fff">v</text></svg>
      <div className="-ml-px flex h-5 w-[4px] flex-col justify-end border border-black bg-white"><div className="h-[6px] bg-[#5bd21b]" /></div>
      <svg viewBox="0 0 20 20" className="size-5"><path d="M1 16C0 9 6 1 14 .700c4 0 6 3 5 7C17 14 10 20 4 19.300c-1.500 0-2.800-1.300-3-3.300z" fill="#dcdcdc" stroke="#bbb" /><path d="M10 2c-1 5 1 9 6 9" fill="none" stroke="#bbb" /><path d="M12 7l3.500-3.500" stroke="#888" strokeWidth="2.200" /></svg>
      <svg viewBox="0 0 20 20" className="size-5"><rect x=".5" y=".5" width="19" height="19" fill="#57bdf8" stroke="#4a9ccf" /><path d="M8 4.500h4V10h3.500L10 15.500 4.500 10H8z" fill="#0d3c78" /></svg>
      <T className="mr-[1px] w-[53px] font-['DejaVu_Sans_Condensed','Noto_Sans'] text-[13px] leading-5 text-black">Right Ctrl</T>
    </div>
  );
}

export default function App() {
  return (
    <div className="flex h-[1080px] w-[1920px] flex-col overflow-hidden bg-[#f0f0f0] font-['Open_Sans','Noto_Sans',sans-serif] text-black">
      {/* window title */}
      <div className="flex h-[29px] items-center bg-white">
        <RedHat className="ml-[2px] size-5" />
        <T className="-mt-[2px] ml-[5px] w-[499px] text-[15px] leading-5">cloudera-quickstart-vm-5.4.2-0-virtualbox [Running] - Oracle VM VirtualBox</T>
        <svg viewBox="0 0 140 20" className="ml-auto mr-[20px] h-5 w-[140px]">
          <path d="M5 8.500h12" stroke="#000" />
          <path d="M63.500 7.500h8v8h-8zM65.500 7.500v-2h8.500v8.500h-2.500" fill="none" stroke="#000" />
          <path d="M122 4l12 12M134 4l-12 12" stroke="#000" strokeWidth="1.100" />
        </svg>
      </div>
      <div className="flex h-[25px] items-center bg-white pt-[3px] text-[14.500px] leading-5">
        <T className="ml-[8px] w-[23px]">File</T>
        <T className="ml-[16px] w-[56px]">Machine</T>
        <T className="ml-[16px] w-[32px]">View</T>
        <T className="ml-[16px] w-[34px]">Input</T>
        <T className="ml-[16px] w-[51px]">Devices</T>
        <T className="ml-[16px] w-[32px]">Help</T>
      </div>
      <div className="h-[952px]"><Guest /></div>
      <div className="flex h-6 justify-end pt-[2px]"><StatusIcons /></div>

      {/* taskbar */}
      <div className="flex h-[50px] items-center bg-[#eeeeee]">
        <svg viewBox="0 0 20 20" className="ml-[20px] size-5 shrink-0"><path d="M0 2.800L8 1.600V9.500H0zM9 1.500L20 0v9.500H9zM0 10.500h8v7.900L0 17.200zM9 10.500h11V20L9 18.500z" /></svg>
        <div className="ml-[20px] flex h-[50px] w-[430px] shrink-0 items-center border border-[#c8c8c8] bg-white">
          <svg viewBox="0 0 22 22" className="ml-[14px] size-[22px]"><circle cx="13.500" cy="8" r="6.500" fill="none" stroke="#222" strokeWidth="1.500" /><path d="M9 13L.8 20.800" stroke="#222" strokeWidth="1.500" /></svg>
          <T className="ml-[13px] w-[163px] text-[18px] leading-6 text-[#333]">Type here to search</T>
        </div>
        <div className="ml-[20px] size-5 shrink-0 rounded-full border-[2.500px] border-black" />
        <svg viewBox="0 0 20 20" className="ml-[40px] size-5 shrink-0"><path d="M.6 0v3.400h12V0M.6 20v-3.400h12V20M.6 5.600h12v9H.6zM18.500 0v4.500M18.500 11v9" fill="none" stroke="#000" strokeWidth="1.200" /><path d="M17 6h3v3h-3z" /></svg>
        <svg viewBox="0 0 27 23" className="ml-[40px] h-[23px] w-[27px] shrink-0"><path d="M0 0h12l1.500 2V5H0z" fill="#dd9a09" /><path d="M0 4h12l2-2h13v20H0z" fill="#ffd45e" /><path d="M5 23V13.500L6.500 12h15l1.500 1.500V23h-4.500v-6h-9v6z" fill="#3f95d8" /></svg>
        <svg viewBox="0 0 30 30" className="ml-[34px] size-[30px] shrink-0">
          <defs>
            <linearGradient id="eg" x1="0" y1="0" x2="1" y2=".4"><stop offset="0" stopColor="#1f9fe0" /><stop offset=".5" stopColor="#2fc3d5" /><stop offset="1" stopColor="#6be04c" /></linearGradient>
          </defs>
          <path d="M1 11C3 4 9 0 15 0c9 0 15 6 15 13 0 5-4 8-8 8-3 0-5-1-5-2s1-2 1-4c0-3-3-6-8-6-4 0-7 1-9 2z" fill="url(#eg)" />
          <path d="M1 11c3-4 9-4 12-2-3 2-5 6-4 11 1 4 4 8 8 10C8 31 0 24 0 15c0-2 .5-3 1-4z" fill="#0f7bd3" />
          <path d="M9 18c0-4 2-7 4-8 0 2-2 4-1 7 2 5 9 7 15 4 1 0 1 0 .6 1-3 5-8 8-12 8-4-2-6.600-7-6.600-12z" fill="#0c4f9e" />
        </svg>
        <svg viewBox="0 0 30 28" className="ml-[32px] h-7 w-[30px] shrink-0"><path d="M0 9L15 0l15 9v6H0z" fill="#0c5fb2" /><path d="M3 9h24L15 18z" fill="#f1f1f1" /><path d="M0 9.500L15 18 0 28z" fill="#1b9ae4" /><path d="M30 9.500L10 21l-10 7h30z" fill="#38bdf0" /><path d="M0 28l15-10 15 10z" fill="#1a95dd" /></svg>
        <svg viewBox="0 0 30 30" className="ml-[32px] size-[30px] shrink-0"><circle cx="15" cy="15" r="15" fill="#fbc116" /><path d="M15 15L2 7.500A15 15 0 0 0 14 30l7-12z" fill="#229a4b" /><path d="M2 7.500A15 15 0 0 1 28 7.500H15L8.500 19z" fill="#e23b2e" /><circle cx="15" cy="15" r="7.300" fill="#fff" /><circle cx="15" cy="15" r="5.900" fill="#2f7bec" /></svg>
        <div className="ml-[21px] flex h-[50px] w-[51px] shrink-0 flex-col items-center border-b-[3px] border-[#b1cf36] pt-[10px]">
          <svg viewBox="0 0 26 30" className="ml-[-3px] h-[30px] w-[26px]"><path d="M4 19c0 6 3 9 9 10 6-1 9-4 9-10z" fill="#b4bccb" /><path d="M13 0L25 5.500 22.500 20 13 27 3.500 20 1 5.500z" fill="#e4e9f2" stroke="#7d89a3" strokeWidth=".6" /><path d="M13 2l8.500 3.800L13 9.500 4.500 5.800z" fill="#1e3a63" /><path d="M3 8l8.500 4v11L5 18.500z" fill="#1b3456" /><path d="M23 8l-8.500 4v11l6.500-4.500z" fill="#1f3d68" /><path d="M8 24c3 3 7 3 10 0" fill="none" stroke="#6d7891" /></svg>
        </div>
        <div className="ml-[6px] flex h-[50px] w-[61px] shrink-0 flex-col items-center border-b-[3px] border-[#b1cf36] bg-[#f8f8f8] pt-[10px]">
          <RedHat className="size-[30px]" />
        </div>
        {/* tray */}
        <svg viewBox="0 0 24 28" className="ml-[445px] h-7 w-6 shrink-0"><path d="M3 5a4.500 4.500 0 0 1 9 0v12a6.500 6.500 0 1 1-9 0z" fill="#8ccaf3" /><path d="M6 7h3v13H6z" fill="#e0446a" /><circle cx="7.500" cy="21.500" r="4" fill="#128fd8" /><path d="M19 8v14M15.500 19l3.500 4.500 3.500-4.500" stroke="#2e62da" strokeWidth="2.500" fill="none" /></svg>
        <T className="ml-[14px] mt-[3px] w-[115px] text-[17px] leading-6">Temps to drop</T>
        <svg viewBox="0 0 16 10" className="ml-[22px] h-[10px] w-4 shrink-0"><path d="M.6 9L8 1.500 15.400 9" fill="none" stroke="#111" strokeWidth="1.400" /></svg>
        <svg viewBox="0 0 16 16" className="ml-[15px] size-4 shrink-0"><g fill="none" stroke="#222" strokeWidth="1.200"><path d="M1 15C1 7 7 1 15 1" /><path d="M4.500 15C5 9 9 5 15 4.700" /><path d="M8 15c0-4 3-6.500 7-6.700" /><path d="M11 15c0-2 2-3.500 4-3.500" /></g><circle cx="14" cy="14.500" r="1.400" /></svg>
        <svg viewBox="0 0 20 14" className="ml-[11px] h-3.5 w-5 shrink-0"><path d="M1 2h5v4H1zM2.500 0v2M5 0v2M3.500 6v5h2" fill="none" stroke="#000" strokeWidth="1.200" /><path d="M6 3.500h11v8.500H6z" /><path d="M4.500 2h14v11h-14M19.500 5.500v4" fill="none" stroke="#000" /></svg>
        <svg viewBox="0 0 20 18" className="ml-[10px] h-[18px] w-5 shrink-0"><g fill="none" stroke="#111" strokeWidth="1.200"><path d="M.6 6h3L7 2v14l-3.400-4h-3z" /><path d="M10 7c1 1.300 1 3 0 4.300M13 4.500c2.300 2.700 2.300 6.500 0 9M16 2c4 4 4 10 0 14" /></g></svg>
        <T className="ml-[13px] w-[28px] text-[15px] leading-5 text-[#111]">ENG</T>
        <div className="ml-[16px] flex w-[77px] shrink-0 flex-col items-center text-[15px] leading-[23px] text-[#111]">
          <T className="w-[35px]">20:20</T>
          <T className="w-[75px]">25-11-2023</T>
        </div>
        <svg viewBox="0 0 20 20" className="ml-[22px] size-5 shrink-0"><path d="M.7.700h18.600v15.300H13l-3 3-3-3H.7z" fill="none" stroke="#000" strokeWidth="1.200" /></svg>
        <div className="ml-[25px] h-[50px] w-px bg-[#c4c4c4]" />
      </div>
    </div>
  );
}
